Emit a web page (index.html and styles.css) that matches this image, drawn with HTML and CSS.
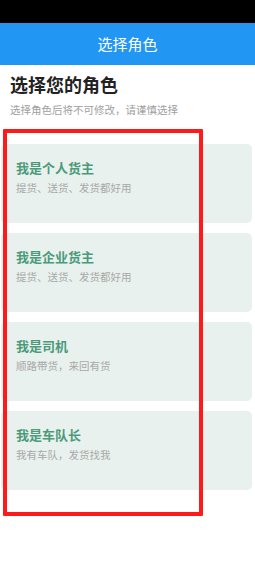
FILE: index.html
```html
<!DOCTYPE html>
<html lang="zh-CN">
<head>
    <meta charset="UTF-8">
    <meta name="viewport" content="width=device-width, initial-scale=1.0">
    <title>选择角色</title>
    <link rel="stylesheet" href="styles.css">
</head>
<body>
    <div class="status-bar"></div>
    <div class="nav-bar">选择角色</div>

    <div class="page">
        <h1>选择您的角色</h1>
        <p class="tip">选择角色后将不可修改，请谨慎选择</p>

        <div class="role-list">
            <div class="role-card">
                <div class="role-name">我是个人货主</div>
                <div class="role-desc">提货、送货、发货都好用</div>
            </div>
            <div class="role-card">
                <div class="role-name">我是企业货主</div>
                <div class="role-desc">提货、送货、发货都好用</div>
            </div>
            <div class="role-card">
                <div class="role-name">我是司机</div>
                <div class="role-desc">顺路带货，来回有货</div>
            </div>
            <div class="role-card">
                <div class="role-name">我是车队长</div>
                <div class="role-desc">我有车队，发货找我</div>
            </div>
        </div>
    </div>

    <!-- 标注框 -->
    <div class="highlight-box"></div>
</body>
</html>
```

FILE: styles.css
```css
body {
    margin: 0;
    font-family: "Noto Sans CJK SC", "Noto Sans", sans-serif;
    background-color: #ffffff;
    width: 255px;
    min-height: 588px;
    position: relative;
}

.status-bar {
    height: 23px;
    background-color: #000000;
}

.nav-bar {
    height: 42px;
    background-color: #2196f3;
    color: #ffffff;
    font-size: 15px;
    line-height: 42px;
    text-align: center;
}

.page {
    padding-top: 7px;
}

h1 {
    margin: 0 0 0 10px;
    font-size: 18px;
    line-height: 24px;
    font-weight: bold;
    color: #222222;
}

.tip {
    margin: 7px 0 0 10px;
    font-size: 10.5px;
    line-height: 14px;
    color: #9e9e9e;
}

.role-list {
    margin: 27px 0 0 1px;
    width: 251px;
    display: flex;
    flex-direction: column;
    gap: 10px;
}

.role-card {
    height: 79px;
    box-sizing: border-box;
    padding: 16px 0 0 15px;
    background-color: #e9f1ee;
    border-radius: 5px;
}

.role-name {
    font-size: 13px;
    line-height: 16px;
    font-weight: bold;
    color: #4b9a7a;
}

.role-desc {
    margin-top: 5px;
    font-size: 10.5px;
    line-height: 14px;
    color: #a8a8a8;
}

/* 红色标注框，盖在卡片上面 */
.highlight-box {
    position: absolute;
    top: 129px;
    left: 3px;
    width: 200px;
    height: 387px;
    box-sizing: border-box;
    border: 4px solid #ff1a1a;
    border-radius: 1px;
}
```
